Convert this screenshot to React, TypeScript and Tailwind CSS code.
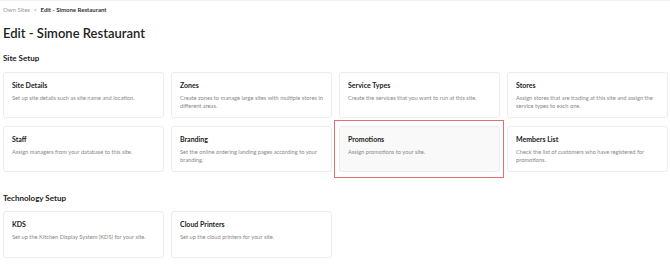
import React from 'react';

interface Item {
  title: string;
  desc: string;
  active?: boolean;
}

const siteSetup: Item[] = [
  { title: 'Site Details', desc: 'Set up site details such as site name and location.' },
  { title: 'Zones', desc: 'Create zones to manage large sites with multiple stores in different areas.' },
  { title: 'Service Types', desc: 'Create the services that you want to run at this site.' },
  { title: 'Stores', desc: 'Assign stores that are trading at this site and assign the service types to each one.' },
  { title: 'Staff', desc: 'Assign managers from your database to this site.' },
  { title: 'Branding', desc: 'Set the online ordering landing pages according to your branding.' },
  { title: 'Promotions', desc: 'Assign promotions to your site.', active: true },
  { title: 'Members List', desc: 'Check the list of customers who have registered for promotions.' },
];

const techSetup: Item[] = [
  { title: 'KDS', desc: 'Set up the Kitchen Display System (KDS) for your site.' },
  { title: 'Cloud Printers', desc: 'Set up the cloud printers for your site.' },
];

function Card({ item, tall }: { item: Item; tall?: boolean }) {
  return (
    <div className="relative">
      {/* highlight box around the hovered card */}
      {item.active && (
        <span className="absolute left-[-5px] right-[-4px] top-[-6px] bottom-[-6px] border border-[#e46f6f] pointer-events-none" />
      )}
      <div
        className={`rounded-[3px] border border-[#ececec] pl-2 pr-[6px] pt-2 ${tall ? 'h-[47px]' : 'h-[46px]'} ${
          item.active ? 'bg-[#f9f9f9]' : 'bg-white'
        }`}
      >
        <div className="text-[7px] leading-[8px] font-bold text-[#222]">{item.title}</div>
        <div className="mt-[5px] text-[5.7px] leading-[8px] text-[#888]">{item.desc}</div>
      </div>
    </div>
  );
}

export default function App() {
  return (
    <div className="w-[670px] h-[273px] bg-white border-t border-[#f1f1f1] overflow-hidden font-['Lato',sans-serif]">
      <div className="px-[3px]">
        <div className="pt-[5px] text-[6px] leading-[8px] text-[#999]">
          Own Sites <span className="mx-[2px]">&gt;</span> <span className="font-bold text-[#333]">Edit - Simone Restaurant</span>
        </div>

        <h1 className="mt-[11px] text-[13px] leading-[16px] font-semibold text-[#222]">Edit - Simone Restaurant</h1>

        <h2 className="mt-[12px] text-[8px] leading-[10px] font-bold text-[#222]">Site Setup</h2>
        <div className="mt-[9px] grid grid-cols-4 gap-x-[7px] gap-y-[8px] w-[665px]">
          {siteSetup.map((item) => (
            <Card key={item.title} item={item} />
          ))}
        </div>

        <h2 className="mt-[21px] text-[8px] leading-[10px] font-bold text-[#222]">Technology Setup</h2>
        <div className="mt-[8px] grid grid-cols-4 gap-x-[7px] w-[665px]">
          {techSetup.map((item) => (
            <Card key={item.title} item={item} tall />
          ))}
        </div>
      </div>
    </div>
  );
}
